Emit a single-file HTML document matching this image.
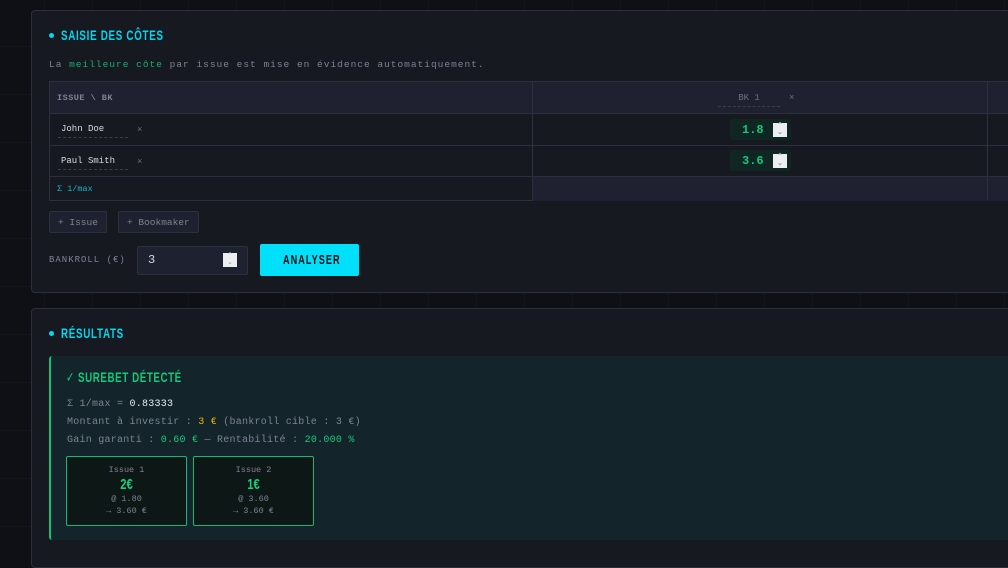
<!DOCTYPE html>
<html><head><meta charset="utf-8"><style>
*{box-sizing:border-box;margin:0;padding:0}
body{width:1008px;height:544px;overflow:hidden;background:#0e1015;
background-image:linear-gradient(#12181a 1px,transparent 1px),linear-gradient(90deg,#12181a 1px,transparent 1px);background-size:48px 48px;background-position:-4px -2px;
font-family:"Liberation Mono",monospace;color:#7d8295;position:relative}
.panel{position:absolute;left:31px;width:990px;background:#171920;border:1px solid #2c2f3d;border-radius:4px}
.cond{font-family:"Liberation Sans","DejaVu Sans",sans-serif;font-weight:bold;display:inline-block;transform:scaleX(0.7);transform-origin:left center;white-space:nowrap}
.h{position:absolute;left:17px;color:#00d8f0;font-size:14px;letter-spacing:1px}
.dot{position:absolute;left:17px;width:5px;height:5px;border-radius:50%;background:#00d8f0}
.abs{position:absolute}
.tbl{position:absolute;left:17px;top:70px;width:980px;height:120px;border:1px solid #2c2f3d}
.row{position:absolute;left:0;right:0;border-bottom:1px solid #2c2f3d}
.vl{position:absolute;top:0;bottom:0;width:1px;background:#2c2f3d}
.name{position:absolute;left:8px;font-size:9px;color:#d8dae2;border-bottom:1px dashed #3a3e4c;width:70px;padding:0 3px 3px}
.x{position:absolute;font-size:9px;color:#6a6f80}
.odd{position:absolute;left:197px;width:61px;height:21px;background:#0f2622;border-radius:2px;color:#12c77a;font-size:12px;font-weight:bold;padding:4px 0 0 12px}
.spin{position:absolute;right:4px;top:4px;width:14px;height:14px;background:#eceef2;color:#999;font-size:7px;text-align:center;line-height:7px}
.btn{position:absolute;top:200px;height:22px;border:1px solid #2c2f3d;background:#1e2130;border-radius:2px;font-size:9.5px;color:#7d8295;padding:5px 8px}
.card{position:absolute;top:100px;width:121px;height:70px;border:1px solid #13b872;border-radius:2px;background:#0d1816;text-align:center;font-size:8.5px;color:#7d8295;line-height:12px;padding-top:7px}
.card b{display:block;font-family:"Liberation Sans",sans-serif;color:#12d17f;font-size:15px;line-height:17px;transform:scaleX(0.75)}
.ln{position:absolute;left:16px;font-size:10px;letter-spacing:0.25px;color:#7d8295}
</style></head><body>
<div class="panel" style="top:10px;height:283px">
<div class="dot" style="top:22px"></div>
<div class="h" style="left:29px;top:16px"><span class="cond">SAISIE DES CÔTES</span></div>
<div class="abs" style="left:17px;top:48px;font-size:9.5px;letter-spacing:1px">La <span style="color:#14b06e">meilleure côte</span> par issue est mise en évidence automatiquement.</div>
<div class="tbl">
<div class="row" style="top:0;height:32px;background:#1f2130"></div>
<div class="row" style="top:32px;height:32px"></div>
<div class="row" style="top:64px;height:31px"></div>
<div class="row" style="top:95px;height:24px;border:none"><div style="position:absolute;left:483px;right:0;top:0;bottom:0;background:#1f2130"></div></div>
<div class="vl" style="left:482px"></div><div class="vl" style="left:937px"></div>
<div class="abs" style="left:7px;top:11px;font-size:8.5px;font-weight:bold;letter-spacing:0.5px;color:#7d8295">ISSUE \ BK</div>
<div class="abs" style="left:668px;top:11px;font-size:9px;color:#6a6f80;border-bottom:1px dashed #3a3e4c;width:62px;text-align:center;padding-bottom:3px">BK 1</div>
<div class="x" style="left:739px;top:11px">×</div>
<div class="name" style="top:42px">John Doe</div><div class="x" style="left:87px;top:43px">×</div>
<div class="name" style="top:74px">Paul Smith</div><div class="x" style="left:87px;top:75px">×</div>
<div class="abs" style="left:7px;top:102px;font-size:8.5px;color:#13b8d0">Σ 1/max</div>
<div class="odd" style="left:680px;top:37px">1.8<div class="spin">⌃<br>⌄</div></div>
<div class="odd" style="left:680px;top:68px">3.6<div class="spin">⌃<br>⌄</div></div>
</div>
<div class="btn" style="left:17px">+ Issue</div>
<div class="btn" style="left:86px">+ Bookmaker</div>
<div class="abs" style="left:17px;top:244px;font-size:9px;letter-spacing:1px">BANKROLL (€)</div>
<div class="abs" style="left:105px;top:235px;width:111px;height:29px;background:#1e2130;border:1px solid #2c2f3d;border-radius:2px;color:#d8dae2;font-size:12px;padding:6px 10px">3<div class="spin" style="top:6px;right:10px">⌃<br>⌄</div></div>
<div class="abs" style="left:228px;top:233px;width:99px;height:32px;background:#00e0fb;border-radius:2px;color:#0b0d12;font-size:13px;letter-spacing:1.5px;line-height:32px;padding-left:23px"><span class="cond">ANALYSER</span></div>
</div>
<div class="panel" style="top:308px;height:260px">
<div class="dot" style="top:22px"></div>
<div class="h" style="left:29px;top:16px"><span class="cond">RÉSULTATS</span></div>
<div class="abs" style="left:17px;top:47px;width:980px;height:184px;background:#13252a;border-left:2px solid #13c279;border-radius:3px">
<div class="abs" style="left:15px;top:13px;color:#14c97b;font-size:14px;letter-spacing:0.8px"><span class="cond">✓ SUREBET DÉTECTÉ</span></div>
<div class="ln" style="top:43px">Σ 1/max = <span style="color:#e6e8ee">0.83333</span></div>
<div class="ln" style="top:61px">Montant à investir : <span style="color:#e8b400">3 €</span> (bankroll cible : 3 €)</div>
<div class="ln" style="top:79px">Gain garanti : <span style="color:#14c97b">0.60 €</span> — Rentabilité : <span style="color:#14c97b">20.000 %</span></div>
<div class="card" style="left:15px">Issue 1<b>2€</b>@ 1.80<br>→ 3.60 €</div>
<div class="card" style="left:142px">Issue 2<b>1€</b>@ 3.60<br>→ 3.60 €</div>
</div>
</div>
</body></html>
